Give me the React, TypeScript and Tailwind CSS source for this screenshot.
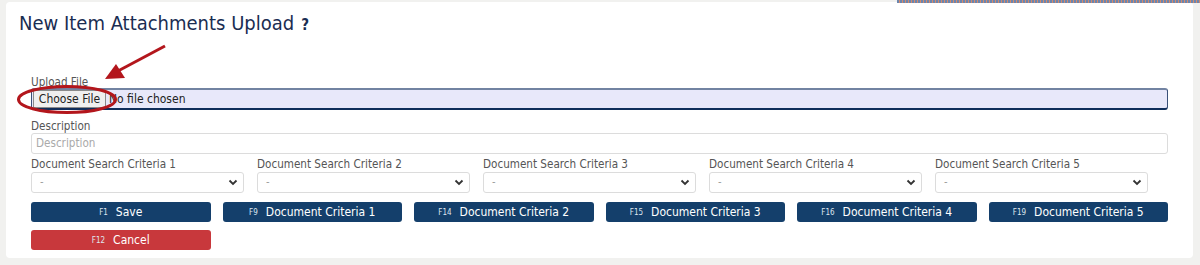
import React from "react";

const font = { fontFamily: '"DejaVu Sans Condensed", "DejaVu Sans", sans-serif' };

function Chevron() {
  return (
    <svg width="10" height="7" viewBox="0 0 10 7" className="shrink-0">
      <path d="M1.5 1.5 L5 5 L8.5 1.5" fill="none" stroke="#333" strokeWidth="1.8" />
    </svg>
  );
}

function Select({ label }: { label: string }) {
  return (
    <div className="flex flex-col pr-[13px]">
      <div className="h-[13px] text-[11.6px] leading-[13px] text-[#555]">{label}</div>
      <div className="mt-[1px] flex h-[21px] items-center justify-between rounded-[3px] border border-[#dcdcdc] bg-white pl-[8px] pr-[5px]">
        <span className="text-[11px] text-[#999]">-</span>
        <Chevron />
      </div>
    </div>
  );
}

function Btn({ k, label, red }: { k: string; label: string; red?: boolean }) {
  return (
    <div
      className={`flex h-[20px] items-center justify-center gap-[8px] rounded-[3px] text-white ${
        red ? "bg-[#c8383c]" : "bg-[#143f6b]"
      }`}
    >
      <span className="pt-[2px] text-[8px] leading-none text-[#dfe6ef]">{k}</span>
      <span className="text-[12px] leading-none">{label}</span>
    </div>
  );
}

export default function App() {
  return (
    <div className="relative h-[265px] w-[1200px] overflow-hidden bg-[#f1f1ef]" style={font}>
      <div className="absolute right-0 top-0 h-[3px] w-[303px] bg-[repeating-linear-gradient(90deg,#6a86b0_0px,#6a86b0_2px,#d58a6a_2px,#d58a6a_3px)]" />
      <div className="ml-[6px] mt-[2px] h-[256px] w-[1187px] rounded-[4px] bg-white">
        <div className="relative flex flex-col pl-[13px] pt-[8px]">
          <div className="flex h-[26px] items-baseline gap-[7px] text-[#1a2d52]">
            <span className="text-[20px] leading-[26px]">New Item Attachments Upload</span>
            <span className="text-[15px] font-bold leading-[26px]">?</span>
          </div>
          <div className="flex flex-col pl-[12px] pr-[25px]">
            <div className="mt-[40px] h-[12px] text-[11.6px] leading-[13px] text-[#555]">Upload File</div>
            <div className="flex h-[22px] items-center rounded-[3px] border-t-2 border-b-2 border-l border-r border-t-[#7283a2] border-b-[#0f2d5a] border-l-[#3a5078] border-r-[#3a5078] bg-[#e8e8fa]">
              <div className="ml-[1px] flex h-[18px] w-[73px] items-center justify-center border border-[#8a8a8a] bg-[#efefef] text-[12px] text-[#222]">
                Choose File
              </div>
              <span className="ml-[3px] text-[12px] text-[#222]">No file chosen</span>
            </div>
            <div className="mt-[10px] h-[13px] text-[11.6px] leading-[13px] text-[#555]">Description</div>
            <div className="flex h-[21px] items-center rounded-[3px] border border-[#dcdcdc] bg-white pl-[4px] text-[11.6px] text-[#aaa]">
              Description
            </div>
            <div className="mt-[4px] grid w-[1130px] grid-cols-5">
              <Select label="Document Search Criteria 1" />
              <Select label="Document Search Criteria 2" />
              <Select label="Document Search Criteria 3" />
              <Select label="Document Search Criteria 4" />
              <Select label="Document Search Criteria 5" />
            </div>
            <div className="mt-[9px] grid grid-cols-6 gap-x-[12px] gap-y-[8px]">
              <Btn k="F1" label="Save" />
              <Btn k="F9" label="Document Criteria 1" />
              <Btn k="F14" label="Document Criteria 2" />
              <Btn k="F15" label="Document Criteria 3" />
              <Btn k="F16" label="Document Criteria 4" />
              <Btn k="F19" label="Document Criteria 5" />
              <Btn k="F12" label="Cancel" red />
            </div>
          </div>
        </div>
      </div>
      <svg className="pointer-events-none absolute left-0 top-0" width="200" height="130" viewBox="0 0 200 130">
        <ellipse cx="67" cy="99.5" rx="48.5" ry="13" fill="none" stroke="#b3161c" strokeWidth="3" />
        <line x1="165" y1="46" x2="118" y2="71" stroke="#b3161c" strokeWidth="3" />
        <polygon points="105,79 116,64 125,78" fill="#b3161c" />
      </svg>
    </div>
  );
}
